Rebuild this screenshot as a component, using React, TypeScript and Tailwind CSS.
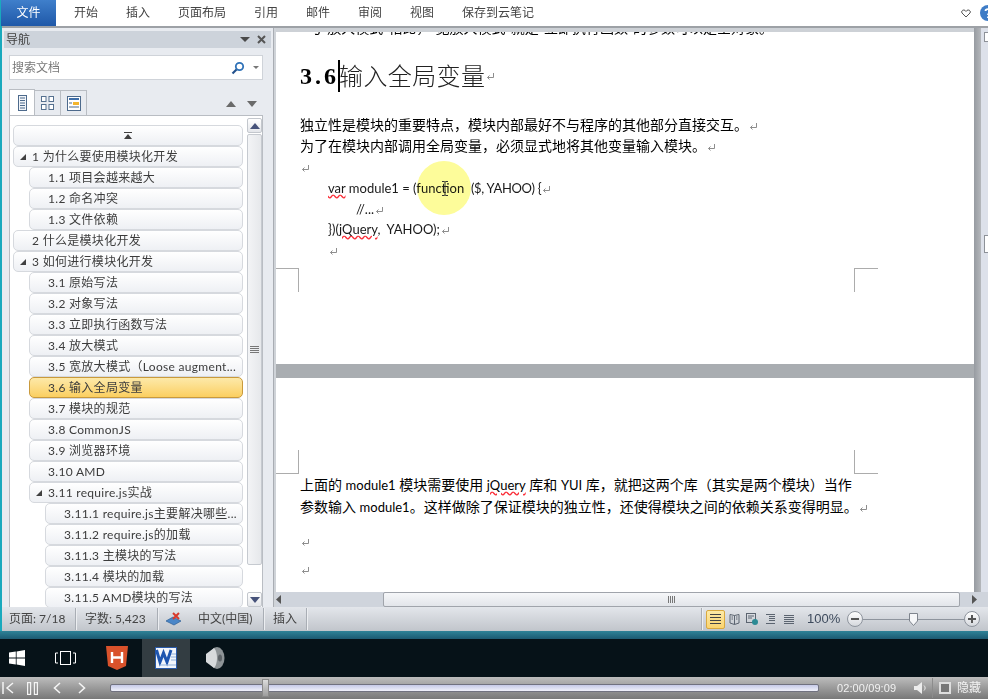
const ribbonTabs = ['开始', '插入', '页面布局', '引用', '邮件', '审阅', '视图', '保存到云笔记'];

const tree: { label: string; level: number; arrow?: boolean; active?: boolean }[] = [
  { label: '1 为什么要使用模块化开发', level: 0, arrow: true },
  { label: '1.1 项目会越来越大', level: 1 },
  { label: '1.2 命名冲突', level: 1 },
  { label: '1.3 文件依赖', level: 1 },
  { label: '2 什么是模块化开发', level: 0 },
  { label: '3 如何进行模块化开发', level: 0, arrow: true },
  { label: '3.1 原始写法', level: 1 },
  { label: '3.2 对象写法', level: 1 },
  { label: '3.3 立即执行函数写法', level: 1 },
  { label: '3.4 放大模式', level: 1 },
  { label: '3.5 宽放大模式（Loose augment...', level: 1 },
  { label: '3.6 输入全局变量', level: 1, active: true },
  { label: '3.7 模块的规范', level: 1 },
  { label: '3.8 CommonJS', level: 1 },
  { label: '3.9 浏览器环境', level: 1 },
  { label: '3.10 AMD', level: 1 },
  { label: '3.11 require.js实战', level: 1, arrow: true },
  { label: '3.11.1 require.js主要解决哪些...', level: 2 },
  { label: '3.11.2 require.js的加载', level: 2 },
  { label: '3.11.3 主模块的写法', level: 2 },
  { label: '3.11.4 模块的加载', level: 2 },
  { label: '3.11.5 AMD模块的写法', level: 2 },
];

// paragraph mark shown after each line
function Para() {
  return (
    <svg width="9" height="9" viewBox="0 0 9 9" className="inline-block ml-[1px] align-[-1px]" fill="none" stroke="#8d8d8d" strokeWidth="1">
      <path d="M7.5 1v4.5H1.5" />
      <path d="M3.5 3.5L1.5 5.5L3.5 7.5" />
    </svg>
  );
}

function TreeRow({ label, level, arrow, active }: { label: string; level: number; arrow?: boolean; active?: boolean }) {
  const ml = level === 0 ? 'ml-0' : level === 1 ? 'ml-[16px]' : 'ml-[32px]';
  const look = active
    ? 'bg-gradient-to-b from-[#fde9a8] to-[#fbcf5f] border-[#c99a3c]'
    : 'bg-gradient-to-b from-white to-[#eef0f4] border-[#d6d9de]';
  return (
    <div className={`relative h-[21px] shrink-0 rounded-[5px] border pl-[18px] flex items-center text-[12px] text-[#3c3c3c] tracking-[0.3px] whitespace-nowrap overflow-hidden ${ml} ${look}`}>
      {arrow && (
        <svg width="6" height="6" viewBox="0 0 6 6" className="absolute left-[6px] top-[7px]">
          <path d="M6 0V6H0Z" fill="#404040" />
        </svg>
      )}
      {label}
    </div>
  );
}

function ScrollBtn({ up }: { up?: boolean }) {
  return (
    <div className="h-[15px] shrink-0 rounded-[2px] border border-[#c3c7cd] bg-gradient-to-b from-white to-[#e4e6ea] flex items-center justify-center">
      <svg width="10" height="6" viewBox="0 0 10 6">
        <path d={up ? 'M5 0L10 6H0Z' : 'M0 0H10L5 6Z'} fill="#46527a" />
      </svg>
    </div>
  );
}

function Sep() {
  return <div className="w-[1px] h-[22px] bg-[#a9aeb5] border-r border-[#eceef1] box-content" />;
}

function CropMark({ className }: { className: string }) {
  return <div className={`absolute w-[24px] h-[24px] border-[#acacac] ${className}`} />;
}

function NavPane() {
  return (
    <div className="w-[272px] shrink-0 bg-[#e8ebf0] border-r border-[#a9adb3] flex flex-col pl-[2px] pr-[1px] pt-[3px] overflow-hidden">
      <div className="h-[17px] mr-[1px] bg-[#cdd3db] flex items-center justify-between pl-[2px] pr-[5px] text-[12px] text-[#3f3f3f]">
        <span>导航</span>
        <div className="flex items-center gap-[7px]">
          <svg width="10" height="5" viewBox="0 0 10 5"><path d="M0 0H10L5 5Z" fill="#4a4a4a" /></svg>
          <svg width="9" height="9" viewBox="0 0 9 9" stroke="#555" strokeWidth="2"><path d="M1 1L8 8M8 1L1 8" /></svg>
        </div>
      </div>
      <div className="mt-[7px] ml-[5px] w-[254px] h-[25px] bg-white border border-[#cfd3d9] flex items-center pl-[2px] pr-[3px] text-[12px] text-[#7a7a7a]">
        <span className="flex-1">搜索文档</span>
        <svg width="14" height="14" viewBox="0 0 14 14" fill="none">
          <circle cx="8.5" cy="5.5" r="3.7" stroke="#2f72b8" strokeWidth="1.8" />
          <path d="M5.5 8.5L1.5 12.5" stroke="#22508c" strokeWidth="2.2" />
        </svg>
        <svg width="6" height="3" viewBox="0 0 6 3" className="ml-[8px]"><path d="M0 0H6L3 3Z" fill="#777" /></svg>
      </div>
      <div className="mt-[9px] ml-[5px] w-[254px] h-[26px] flex items-end relative z-10">
        <div className="w-[26px] h-[26px] bg-white border border-b-0 border-[#b9bdc3] flex items-center justify-center">
          <svg width="9" height="16" viewBox="0 0 9 16" fill="none" stroke="#4d6a8c"><rect x="0.5" y="0.5" width="8" height="15" fill="#f2f5f9" /><path d="M2 3H7M2 5.5H7M2 8H7M2 10.5H7M2 13H7" /></svg>
        </div>
        <div className="w-[26px] h-[25px] border border-l-0 border-b-0 border-[#b9bdc3] flex items-center justify-center">
          <svg width="13" height="14" viewBox="0 0 13 14" fill="#fff" stroke="#55708f"><rect x="0.5" y="0.5" width="4.5" height="5" /><rect x="8" y="0.5" width="4.5" height="5" /><rect x="0.5" y="8.5" width="4.5" height="5" /><rect x="8" y="8.5" width="4.5" height="5" /></svg>
        </div>
        <div className="w-[26px] h-[25px] border border-l-0 border-b-0 border-[#b9bdc3] flex items-center justify-center">
          <svg width="14" height="15" viewBox="0 0 14 15" fill="none"><rect x="0.5" y="0.5" width="13" height="14" fill="#fff" stroke="#4d6a8c" /><rect x="2" y="2" width="10" height="2" fill="#3f6ea8" /><rect x="6" y="6" width="6" height="3" fill="#f3b52e" /><path d="M2 7H5M2 11H12" stroke="#4d6a8c" /></svg>
        </div>
        <div className="ml-auto mr-[6px] mb-[8px] flex gap-[11px]">
          <svg width="10" height="6" viewBox="0 0 10 6"><path d="M5 0L10 6H0Z" fill="#6a6a6a" /></svg>
          <svg width="10" height="6" viewBox="0 0 10 6"><path d="M0 0H10L5 6Z" fill="#6a6a6a" /></svg>
        </div>
      </div>
      <div className="ml-[5px] w-[254px] flex-1 min-h-0 bg-white border border-[#b9bdc3] flex pl-[3px] pt-[9px] overflow-hidden -mb-[3px]">
        <div className="w-[230px] shrink-0 flex flex-col">
          <div className="h-[21px] shrink-0 rounded-[5px] border border-[#d6d9de] bg-gradient-to-b from-white to-[#eef0f4] flex items-center justify-center">
            <svg width="8" height="7" viewBox="0 0 8 7"><path d="M0 0H8V1H0ZM4 2L8 7H0Z" fill="#404040" /></svg>
          </div>
          {tree.map((row) => (
            <TreeRow key={row.label} {...row} />
          ))}
        </div>
        <div className="ml-[4px] w-[15px] shrink-0 -mt-[7px] mb-[2px] flex flex-col gap-[1px]">
          <ScrollBtn up />
          <div className="h-[431px] shrink-0 rounded-[2px] border border-[#c6cad0] bg-gradient-to-r from-[#f3f4f6] to-[#e6e8eb] flex items-center justify-center">
            <svg width="9" height="7" viewBox="0 0 9 7" stroke="#777"><path d="M0 0.5H9M0 2.5H9M0 4.5H9M0 6.5H9" /></svg>
          </div>
          <div className="flex-1" />
          <ScrollBtn />
        </div>
      </div>
    </div>
  );
}

function Document() {
  return (
    <div className="flex-1 min-w-0 flex flex-col bg-[#cfd3d8] pl-[2px]">
      <div className="flex-1 min-h-0 flex overflow-hidden">
        <div className="w-[698px] shrink-0 flex flex-col bg-[#a9adb1]">
          <div className="h-[4px] shrink-0 bg-[#cdd1d6]" />
          <div className="relative h-[332px] shrink-0 bg-white text-black">
            <div className="h-[3px] overflow-hidden pl-[32px] text-[14px] leading-[14px] whitespace-nowrap">
              <div className="-mt-[11px]">与"放大模式"相比，"宽放大模式"就是"立即执行函数"的参数可以是空对象。</div>
            </div>
            <div className="mt-[26px] pl-[24px] h-[30px] flex items-center">
              <span className="font-['Liberation_Serif',serif] font-bold text-[24px] tracking-[3px]">3.6</span>
              <span className="w-[2px] h-[32px] bg-black -ml-[1px]" />
              <span className="-ml-[1px] text-[24px] font-light text-[#222] leading-[30px] tracking-[0.4px]">输入全局变量</span>
              <Para />
            </div>
            <div className="mt-[23px] pl-[24px] text-[14px] leading-[21px]">
              <div>独立性是模块的重要特点，模块内部最好不与程序的其他部分直接交互。<Para /></div>
              <div>为了在模块内部调用全局变量，必须显式地将其他变量输入模块。<Para /></div>
              <div><Para /></div>
            </div>
            <div className="mt-[1px] pl-[52px] text-[13px] leading-[20.6px] text-[#1a1a1a]">
              <div><span className="underline decoration-wavy decoration-red-500">var</span> module1 = (function&nbsp; <span className="tracking-[-0.3px]">($, YAHOO) {'{'}</span><Para /></div>
              <div className="pl-[28px]">//...<Para /></div>
              <div>{'}'})(<span className="underline decoration-wavy decoration-red-500">jQuery</span>,&nbsp; YAHOO);<Para /></div>
              <div><Para /></div>
            </div>
            <div className="absolute left-[141px] top-[129px] w-[54px] h-[54px] rounded-full bg-[#fdfc9a] mix-blend-multiply" />
            <svg width="8" height="15" viewBox="0 0 8 15" className="absolute left-[165px] top-[149px]" fill="none" stroke="#333">
              <path d="M1 0.5H3.5L4 1.5L4.5 0.5H7M4 1.5V13.5M1 14.5H3.5L4 13.5L4.5 14.5H7" />
            </svg>
            <CropMark className="-left-[1px] top-[236px] border-r border-t" />
            <CropMark className="left-[578px] top-[236px] border-l border-t" />
          </div>
          <div className="h-[14px] shrink-0" />
          <div className="relative flex-1 bg-white text-black pt-[96px] pl-[24px] text-[14px] leading-[22px] whitespace-nowrap">
            <div>上面的 <span className="text-[13px]">module1</span> 模块需要使用 <span className="text-[13px] underline decoration-wavy decoration-red-500">jQuery</span> 库和 <span className="text-[13px]">YUI</span> 库，就把这两个库（其实是两个模块）当作</div>
            <div>参数输入 <span className="text-[13px]">module1</span>。这样做除了保证模块的独立性，还使得模块之间的依赖关系变得明显。<Para /></div>
            <div className="mt-[12px]"><Para /></div>
            <div className="mt-[6px]"><Para /></div>
            <CropMark className="-left-[1px] top-[72px] border-r border-b" />
            <CropMark className="left-[578px] top-[72px] border-l border-b" />
          </div>
        </div>
        <div className="w-[7px] shrink-0 bg-gradient-to-r from-[#979ba1] to-[#b4b7bb]" />
        <div className="flex-1 bg-[#dde1ea] flex flex-col items-end">
          <div className="mt-[4px] w-[4px] h-[10px] border-l border-t border-b border-[#8d9198] bg-white" />
          <div className="mt-[193px] w-[4px] h-[18px] border-l border-t border-b border-[#8d9198] bg-white" />
        </div>
      </div>
      <div className="h-[15px] shrink-0 flex items-center bg-[#cfd4dc]">
        <svg width="5" height="9" viewBox="0 0 5 9"><path d="M5 0V9L0 4.5Z" fill="#555" /></svg>
        <div className="ml-[102px] w-[577px] h-[15px] rounded-[2px] border border-[#a0a4ab] bg-gradient-to-b from-[#f6f7f9] to-[#e2e5ea] flex items-center justify-center">
          <svg width="7" height="7" viewBox="0 0 7 7" stroke="#777"><path d="M0.5 0V7M2.5 0V7M4.5 0V7M6.5 0V7" /></svg>
        </div>
        <svg width="5" height="9" viewBox="0 0 5 9" className="ml-[12px]"><path d="M0 0V9L5 4.5Z" fill="#555" /></svg>
      </div>
    </div>
  );
}

function StatusBar() {
  return (
    <div className="h-[24px] shrink-0 bg-gradient-to-b from-[#e3e6eb] to-[#c1c5cb] flex items-center pr-[8px] text-[12px] text-[#444] whitespace-nowrap">
      <span className="ml-[7px] w-[66px]">页面: 7/18</span>
      <Sep />
      <span className="ml-[8px] w-[72px]">字数: 5,423</span>
      <Sep />
      <svg width="17" height="14" viewBox="0 0 17 14" className="ml-[6px]">
        <path d="M1 9L8 5L16 9L9 13Z" fill="#4a86c8" stroke="#2c5e96" strokeWidth="0.7" />
        <path d="M8 1L14 7M14 1L8 7" stroke="#d8392b" strokeWidth="2" />
      </svg>
      <span className="ml-[16px] w-[65px]">中文(中国)</span>
      <Sep />
      <span className="ml-[8px] w-[33px]">插入</span>
      <Sep />
      <div className="flex-1" />
      <Sep />
      <div className="ml-[3px] w-[19px] h-[19px] rounded-[2px] border border-[#d9a93e] bg-gradient-to-b from-[#fdeaa6] to-[#fbd46e] flex items-center justify-center">
        <svg width="11" height="10" viewBox="0 0 11 10" stroke="#444"><path d="M0 0.5H11M0 3.5H11M0 6.5H11M0 9.5H11" /></svg>
      </div>
      <svg width="11" height="11" viewBox="0 0 11 11" fill="none" stroke="#5b6470" className="ml-[4px]"><path d="M5.5 1.5L1 0.5V9L5.5 10.5L10 9V0.5ZM5.5 1.5V10.5M2.5 3H4M2.5 5H4M7 3H8.5M7 5H8.5" /></svg>
      <svg width="12" height="12" viewBox="0 0 12 12" fill="none" className="ml-[6px]"><rect x="0.5" y="0.5" width="9" height="9" stroke="#5b6470" /><path d="M2 3H8M2 5H6" stroke="#5b6470" /><circle cx="9" cy="9" r="3" fill="#2b8a94" /></svg>
      <svg width="10" height="10" viewBox="0 0 10 10" stroke="#5b6470" className="ml-[8px]"><path d="M0 0.5H9M3 2.5H9M3 4.5H9M3 6.5H9M0 9.5H9" /></svg>
      <svg width="10" height="9" viewBox="0 0 10 9" stroke="#5b6470" className="ml-[8px]"><path d="M0 0.5H10M0 2.5H10M0 4.5H10M0 6.5H10M0 8.5H10" /></svg>
      <span className="ml-[13px] w-[32px] text-[13px] text-[#3d4a5c] font-['Liberation_Sans',sans-serif]">100%</span>
      <div className="ml-[8px] w-[16px] h-[16px] rounded-full border border-[#8e949d] bg-gradient-to-b from-white to-[#d5d8dd] flex items-center justify-center">
        <div className="w-[8px] h-[2px] bg-[#555]" />
      </div>
      <div className="relative w-[101px] h-[1px] bg-[#8e949d]">
        <svg width="9" height="13" viewBox="0 0 9 13" className="absolute left-[46px] -top-[6px]"><path d="M0.5 0.5H8.5V8L4.5 12.5L0.5 8Z" fill="#f5f6f8" stroke="#7e848d" /></svg>
      </div>
      <div className="w-[16px] h-[16px] rounded-full border border-[#8e949d] bg-gradient-to-b from-white to-[#d5d8dd] flex items-center justify-center relative">
        <div className="w-[8px] h-[2px] bg-[#555]" />
        <div className="absolute w-[2px] h-[8px] bg-[#555]" />
      </div>
    </div>
  );
}

function Taskbar() {
  return (
    <div className="h-[38px] shrink-0 bg-[#061218] flex items-center">
      <svg width="16" height="16" viewBox="0 0 16 16" fill="#fff" className="ml-[9px]">
        <path d="M0 2.5L6.8 1.5V7.6H0ZM7.6 1.4L16 0V7.6H7.6ZM0 8.4H6.8V14.5L0 13.5ZM7.6 8.4H16V16L7.6 14.6Z" />
      </svg>
      <svg width="21" height="14" viewBox="0 0 21 14" fill="none" stroke="#fff" className="ml-[30px]">
        <rect x="5.5" y="0.5" width="10" height="13" />
        <path d="M3 2H0.5V12H3M18 2H20.5V12H18" />
      </svg>
      <svg width="22" height="24" viewBox="0 0 22 24" className="ml-[30px]">
        <path d="M0 0H22L20 20L11 24L2 20Z" fill="#d9522b" />
        <path d="M6 6V17M16 6V17M6 11.5H16" stroke="#fff" strokeWidth="2.4" fill="none" />
      </svg>
      <div className="ml-[14px] w-[48px] h-[38px] bg-[#333d42] flex items-center justify-center">
        <svg width="23" height="22" viewBox="0 0 23 22">
          <rect x="0.5" y="0.5" width="21" height="21" fill="#f3f6fb" stroke="#2a5aa8" />
          <path d="M1.5 3L5 15L8.5 6L12 15L16 3" fill="none" stroke="#1f56b0" strokeWidth="3" />
          <path d="M16 7H21M16 10H21M16 13H21M5 18H21" stroke="#8fb0dc" strokeWidth="1.2" />
        </svg>
      </div>
      <svg width="20" height="24" viewBox="0 0 20 24" className="ml-[15px]">
        <ellipse cx="12" cy="12" rx="7.5" ry="11" fill="#8d9396" />
        <path d="M1 8L9 2C13 6 13 18 9 22L1 16Z" fill="#d7dadc" />
        <ellipse cx="15" cy="12" rx="2" ry="3.5" fill="#5d6367" />
      </svg>
    </div>
  );
}

function Controls() {
  return (
    <div className="h-[22px] shrink-0 bg-gradient-to-b from-[#bdbdbd] to-[#787878] flex items-center text-[#f2f2f2]">
      <svg width="12" height="12" viewBox="0 0 12 12" fill="none" stroke="#f4f4f4" strokeWidth="1.5" className="ml-[2px]">
        <path d="M1 0V12M11 1L5 6L11 11" />
      </svg>
      <svg width="11" height="13" viewBox="0 0 11 13" fill="none" stroke="#f4f4f4" strokeWidth="1.2" className="ml-[13px]">
        <rect x="0.6" y="0.6" width="3" height="11.8" /><rect x="7.4" y="0.6" width="3" height="11.8" />
      </svg>
      <svg width="8" height="12" viewBox="0 0 8 12" fill="none" stroke="#f4f4f4" strokeWidth="1.6" className="ml-[15px]"><path d="M7 1L1.5 6L7 11" /></svg>
      <svg width="8" height="12" viewBox="0 0 8 12" fill="none" stroke="#f4f4f4" strokeWidth="1.6" className="ml-[17px]"><path d="M1 1L6.5 6L1 11" /></svg>
      <div className="relative ml-[24px] w-[709px] h-[8px] rounded-[2px] border border-[#70717f] bg-gradient-to-b from-[#c6cae8] to-[#f0f1fa]">
        <div className="absolute left-[151px] -top-[6px] w-[7px] h-[18px] bg-gradient-to-b from-[#dcdcdc] to-[#9e9e9e] border border-[#8a8a8a]" />
      </div>
      <span className="ml-[18px] w-[58px] text-[11px] tracking-[0.1px] font-['Liberation_Sans',sans-serif] whitespace-nowrap">02:00/09:09</span>
      <svg width="13" height="12" viewBox="0 0 13 12" className="ml-[19px]">
        <path d="M0 4H3L8 0V12L3 8H0Z" fill="#ececec" />
        <path d="M10 3.5C11.5 5 11.5 7 10 8.5" stroke="#ececec" fill="none" />
      </svg>
      <div className="ml-[5px] w-[1px] h-[20px] bg-[#8c8c8c]" />
      <div className="ml-[6px] w-[12px] h-[12px] border-2 border-[#dedede] bg-[#777]" />
      <span className="ml-[6px] text-[12px] whitespace-nowrap">隐藏</span>
    </div>
  );
}

export default function App() {
  return (
    <div className="w-[988px] h-[699px] overflow-hidden flex flex-col font-['Lato','Noto_Sans_CJK_SC',sans-serif]">
      <div className="h-[631px] shrink-0 flex flex-col border-l-2 border-[#19a9bd] bg-white">
        {/* Ribbon tabs */}
        <div className="h-[28px] shrink-0 border-b-2 border-[#9da1a6] flex items-center text-[12px] text-[#444] whitespace-nowrap">
          <div className="w-[55px] h-[26px] -ml-[1px] bg-gradient-to-b from-[#3f7fcb] to-[#1f58a8] text-white flex items-center justify-center">文件</div>
          <div className="ml-[18px] flex gap-[28px]">
            {ribbonTabs.map((t) => (
              <span key={t}>{t}</span>
            ))}
          </div>
          <svg width="10" height="9" viewBox="0 0 10 9" fill="none" stroke="#555" className="ml-auto mr-[9px]"><path d="M5 8L1 4C-0.5 1.5 3.5 -0.5 5 2.5C6.5 -0.5 10.5 1.5 9 4Z" /></svg>
          <svg width="16" height="16" viewBox="0 0 16 16" className="-mr-[8px] shrink-0">
            <circle cx="8" cy="8" r="8" fill="#3e7cc6" />
            <path d="M5.5 6C5.5 3.5 10.5 3.5 10.5 6C10.5 8 8 8 8 10M8 11.5V13" stroke="#fff" strokeWidth="1.8" fill="none" />
          </svg>
        </div>
        <div className="flex-1 min-h-0 flex">
          <NavPane />
          <Document />
        </div>
        <StatusBar />
      </div>
      <div className="h-[8px] shrink-0 bg-gradient-to-b from-[#2f8398] to-[#1c5a72]" />
      <Taskbar />
      <Controls />
    </div>
  );
}
